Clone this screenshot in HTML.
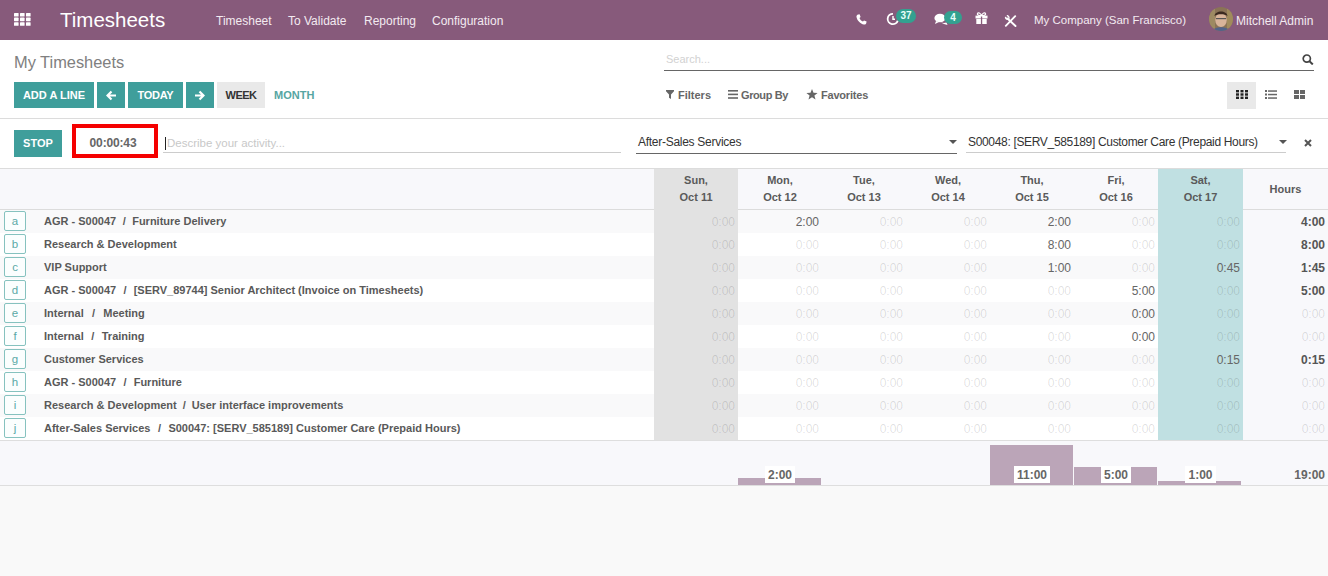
<!DOCTYPE html>
<html><head><meta charset="utf-8">
<style>
*{box-sizing:border-box;margin:0;padding:0}
html,body{width:1328px;height:576px;overflow:hidden;background:#f9f9f9;font-family:"Liberation Sans",sans-serif;color:#4c4c4c;position:relative}
.a{position:absolute;white-space:nowrap}
.nt{color:#f3eaf1;font-size:12px;line-height:14px}
.btn{position:absolute;background:#3f9e9b;color:#fff;font-size:11px;font-weight:bold;text-align:center;line-height:26px;height:26px;top:82px}
.hd{font-size:11px;font-weight:bold;color:#5a5a5a;text-align:center;line-height:16.6px}
.lb{left:4px;width:22px;height:20px;border:1px solid #86c2bf;border-radius:2px;color:#5aa9a6;font-size:11.5px;text-align:center;line-height:19px;background:#fbfefe}
.lt{left:44px;font-size:11px;font-weight:bold;color:#595959;line-height:23px}
.sp{display:inline-block;font-style:normal;width:16px;text-align:center}
.c{font-size:12px;text-align:right;line-height:23px;width:70px}
.z{color:rgba(0,0,0,0.13)}
.v{color:#666}
.tv{color:#555;font-weight:bold}
.fl{text-align:center;font-size:12px;font-weight:bold;color:#666;line-height:17px}
.fl span{background:#fff;padding:1px 3px 0;height:17px;display:inline-block}
</style></head><body>
<!-- navbar -->
<div class="a" style="left:0;top:0;width:1328px;height:40px;background:#875a7b"></div>
<svg class="a" style="left:14px;top:13px" width="17" height="13" viewBox="0 0 17 13">
 <g fill="#fff">
 <rect x="0" y="0" width="4.6" height="3.6" rx="0.6"/><rect x="6" y="0" width="4.6" height="3.6" rx="0.6"/><rect x="12" y="0" width="4.6" height="3.6" rx="0.6"/>
 <rect x="0" y="4.6" width="4.6" height="3.6" rx="0.6"/><rect x="6" y="4.6" width="4.6" height="3.6" rx="0.6"/><rect x="12" y="4.6" width="4.6" height="3.6" rx="0.6"/>
 <rect x="0" y="9.2" width="4.6" height="3.6" rx="0.6"/><rect x="6" y="9.2" width="4.6" height="3.6" rx="0.6"/><rect x="12" y="9.2" width="4.6" height="3.6" rx="0.6"/>
 </g></svg>
<div class="a" style="left:60px;top:8px;font-size:20.5px;line-height:23px;color:#fff">Timesheets</div>
<div class="a nt" style="left:216px;top:14px">Timesheet</div>
<div class="a nt" style="left:288px;top:14px">To Validate</div>
<div class="a nt" style="left:364px;top:14px">Reporting</div>
<div class="a nt" style="left:432px;top:14px">Configuration</div>
<!-- right icons -->
<svg class="a" style="left:856px;top:14px" width="11" height="11" viewBox="0 0 11 11"><path d="M2.2 0.6 L3.6 0.3 L4.6 2.9 L3.5 3.9 C4.1 5.5 5.4 6.9 7 7.6 L8 6.5 L10.6 7.5 L10.3 8.9 C10 10.1 9 10.7 7.9 10.5 C4.3 9.8 1.2 6.7 0.5 3 C0.3 1.9 1 0.9 2.2 0.6Z" fill="#fff"/></svg>
<svg class="a" style="left:886px;top:12px" width="14" height="14" viewBox="0 0 14 14"><path d="M11.8 8.6 A5.2 5.2 0 1 1 7 1.8" stroke="#fff" stroke-width="1.8" fill="none"/><path d="M7 4 V7.2 H9" stroke="#fff" stroke-width="1.4" fill="none"/></svg>
<div class="a" style="left:896px;top:9px;width:20px;height:14px;border-radius:7px;background:#33a190;color:#e8fffb;font-size:10px;font-weight:bold;line-height:14px;text-align:center">37</div>
<svg class="a" style="left:934px;top:13px" width="14" height="13" viewBox="0 0 14 13"><ellipse cx="6" cy="5" rx="5.6" ry="4.3" fill="#fff"/><path d="M2 8 L1 11 L5 9Z" fill="#fff"/><path d="M7 9.5 C9 10 11 10 12.5 9.5 L13.5 12 L10 11 Z" fill="#fff"/></svg>
<div class="a" style="left:944px;top:10.5px;width:18px;height:13px;border-radius:6.5px;background:#33a190;color:#e8fffb;font-size:10px;font-weight:bold;line-height:13px;text-align:center">4</div>
<svg class="a" style="left:975px;top:12px" width="13" height="12" viewBox="0 0 13 12"><path d="M6.5 3.6 C5.5 1 3 0 2.5 1.5 C2 2.8 3.5 3.5 5 3.6Z M6.5 3.6 C7.5 1 10 0 10.5 1.5 C11 2.8 9.5 3.5 8 3.6Z" fill="none" stroke="#fff" stroke-width="1.3"/><rect x="0.5" y="3.6" width="12" height="2.9" fill="#fff"/><rect x="1.3" y="7" width="10.4" height="5" fill="#fff"/><rect x="5.9" y="4.5" width="1.3" height="7.5" fill="#875a7b"/></svg>
<svg class="a" style="left:1004px;top:15px" width="13" height="12" viewBox="0 0 13 12"><path d="M3.5 3.5 L11.5 11" stroke="#fff" stroke-width="1.9" stroke-linecap="round"/><path d="M11.2 1.2 L1.8 10.8" stroke="#fff" stroke-width="1.9" stroke-linecap="round"/><path d="M1 1.6 A2.4 2.4 0 0 0 4.3 4.6 L3.6 3.3 L2.5 2.4Z" fill="#fff"/><path d="M2.8 0.5 A2.4 2.4 0 0 1 4.8 3.8" stroke="#fff" stroke-width="1.3" fill="none"/></svg>
<div class="a nt" style="left:1034px;top:13px;font-size:11.5px">My Company (San Francisco)</div>
<div class="a" style="left:1209px;top:7px;width:24px;height:24px;border-radius:12px;overflow:hidden;background:#8a7356"><svg width="24" height="24" viewBox="0 0 24 24"><rect x="0" y="0" width="6" height="24" fill="#9d8a62"/><rect x="18" y="0" width="6" height="24" fill="#a08b5c"/><ellipse cx="12" cy="13" rx="5.8" ry="7" fill="#d8b49a"/><path d="M5.5 9 C6 3 18 3 18.5 9 C16 6.5 8 6.5 5.5 9Z" fill="#3b2a20"/><rect x="7" y="11" width="10" height="1.2" fill="#555"/><path d="M3 24 C5 19 19 19 21 24Z" fill="#52638a"/></svg></div>
<div class="a nt" style="left:1236px;top:14px">Mitchell Admin</div>

<!-- control panel -->
<div class="a" style="left:0;top:40px;width:1328px;height:79px;background:#fff;border-bottom:1px solid #dcdcdc"></div>
<div class="a" style="left:14px;top:53px;font-size:16.4px;line-height:18px;color:#808080">My Timesheets</div>
<div class="a" style="left:664px;top:70px;width:650px;height:1px;background:#666"></div>
<div class="a" style="left:666px;top:53px;font-size:11px;line-height:12px;color:#d2d2d2">Search...</div>
<svg class="a" style="left:1302px;top:54px" width="12" height="11" viewBox="0 0 12 11"><circle cx="4.8" cy="4.6" r="3.6" stroke="#444" stroke-width="1.7" fill="none"/><path d="M7.5 7.3 L10.8 10.4" stroke="#444" stroke-width="2"/></svg>

<div class="btn" style="left:14px;width:80px">ADD A LINE</div>
<div class="btn" style="left:97px;width:28px"><svg style="position:absolute;left:9px;top:8px" width="11" height="11" viewBox="0 0 11 11"><path d="M10 5.5 H2 M5.5 1.5 L1.5 5.5 L5.5 9.5" stroke="#fff" stroke-width="2.2" fill="none"/></svg></div>
<div class="btn" style="left:128px;width:55px;letter-spacing:-0.3px">TODAY</div>
<div class="btn" style="left:186px;width:28px"><svg style="position:absolute;left:8px;top:8px" width="11" height="11" viewBox="0 0 11 11"><path d="M1 5.5 H9 M5.5 1.5 L9.5 5.5 L5.5 9.5" stroke="#fff" stroke-width="2.2" fill="none"/></svg></div>
<div class="btn" style="left:217px;width:48px;background:#e9e9e9;color:#333;letter-spacing:-0.5px">WEEK</div>
<div class="a" style="left:274px;top:82px;font-size:11px;font-weight:bold;line-height:26px;color:#56a5a2">MONTH</div>

<svg class="a" style="left:666px;top:90px" width="8" height="9" viewBox="0 0 8 9"><path d="M0 0 H8 V1.2 L5 4.5 V9 L3 7.8 V4.5 L0 1.2Z" fill="#666"/></svg>
<div class="a" style="left:678px;top:89px;font-size:11px;line-height:12px;color:#666;font-weight:bold">Filters</div>
<svg class="a" style="left:728px;top:90px" width="10" height="9" viewBox="0 0 10 9"><rect y="0" width="10" height="1.6" fill="#666"/><rect y="3.6" width="10" height="1.6" fill="#666"/><rect y="7.2" width="10" height="1.6" fill="#666"/></svg>
<div class="a" style="left:741px;top:89px;font-size:11px;line-height:12px;color:#666;font-weight:bold;letter-spacing:-0.4px">Group By</div>
<svg class="a" style="left:806px;top:89px" width="12" height="11" viewBox="0 0 12 11"><path d="M6 0 L7.5 3.8 L11.6 4 L8.4 6.5 L9.5 10.5 L6 8.2 L2.5 10.5 L3.6 6.5 L0.4 4 L4.5 3.8Z" fill="#666"/></svg>
<div class="a" style="left:821px;top:89px;font-size:11px;line-height:12px;color:#666;font-weight:bold;letter-spacing:-0.2px">Favorites</div>

<div class="a" style="left:1227px;top:82px;width:29px;height:27px;background:#e9e9e9"></div>
<svg class="a" style="left:1236px;top:90px" width="12" height="9" viewBox="0 0 12 9"><g fill="#222"><rect x="0" y="0" width="3" height="2.4"/><rect x="4.5" y="0" width="3" height="2.4"/><rect x="9" y="0" width="3" height="2.4"/><rect x="0" y="3.3" width="3" height="2.4"/><rect x="4.5" y="3.3" width="3" height="2.4"/><rect x="9" y="3.3" width="3" height="2.4"/><rect x="0" y="6.6" width="3" height="2.4"/><rect x="4.5" y="6.6" width="3" height="2.4"/><rect x="9" y="6.6" width="3" height="2.4"/></g></svg>
<svg class="a" style="left:1265px;top:90px" width="12" height="9" viewBox="0 0 12 9"><g fill="#666">
<rect x="0" y="0" width="2" height="2"/><rect x="3" y="0.3" width="9" height="1.5"/>
<rect x="0" y="3.5" width="2" height="2"/><rect x="3" y="3.8" width="9" height="1.5"/>
<rect x="0" y="7" width="2" height="2"/><rect x="3" y="7.3" width="9" height="1.5"/></g></svg>
<svg class="a" style="left:1294px;top:90px" width="11" height="9" viewBox="0 0 11 9"><g fill="#666">
<rect x="0" y="0" width="5" height="4"/><rect x="6" y="0" width="5" height="4"/><rect x="0" y="5" width="5" height="4"/><rect x="6" y="5" width="5" height="4"/></g></svg>

<!-- timer row -->
<div class="a" style="left:0;top:119px;width:1328px;height:50px;background:#fff;border-bottom:1px solid #dcdcdc"></div>
<div class="btn" style="left:14px;top:130px;width:48px;height:27px;line-height:27px">STOP</div>
<div class="a" style="left:72px;top:124px;width:86px;height:34px;border:4px solid #f50000;background:#fff"></div>
<div class="a" style="left:70px;top:125px;width:86px;height:34px;font-size:12px;font-weight:bold;color:#666;text-align:center;line-height:37px;letter-spacing:-0.15px">00:00:43</div>
<div class="a" style="left:163px;top:152px;width:458px;height:1px;background:#ccc"></div>
<div class="a" style="left:165px;top:137px;width:1px;height:13px;background:#222"></div>
<div class="a" style="left:167px;top:137px;font-size:11.5px;line-height:12px;color:#c8c8c8">Describe your activity...</div>
<div class="a" style="left:636px;top:153px;width:321px;height:1px;background:#666"></div>
<div class="a" style="left:638px;top:136px;font-size:12px;line-height:12px;color:#333;letter-spacing:-0.28px">After-Sales Services</div>
<svg class="a" style="left:949px;top:140px" width="8" height="4" viewBox="0 0 8 4"><path d="M0 0 H8 L4 4Z" fill="#555"/></svg>
<div class="a" style="left:966px;top:152px;width:320px;height:1px;background:#ccc"></div>
<div class="a" style="left:968px;top:136px;font-size:12px;line-height:12px;color:#333;letter-spacing:-0.33px">S00048: [SERV_585189] Customer Care (Prepaid Hours)</div>
<svg class="a" style="left:1279px;top:140px" width="8" height="4" viewBox="0 0 8 4"><path d="M0 0 H8 L4 4Z" fill="#555"/></svg>
<svg class="a" style="left:1304px;top:139px" width="8" height="8" viewBox="0 0 8 8"><path d="M1 1 L7 7 M7 1 L1 7" stroke="#555" stroke-width="2"/></svg>

<!-- grid -->
<div class="a" style="left:0;top:169px;width:1328px;height:317px;background:#fff"></div>
<div class="a" style="left:0;top:169px;width:1328px;height:41px;background:#f8f8fb;border-bottom:1px solid #dcdcdc"></div>
<div class="a" style="left:654px;top:169px;width:84px;height:271px;background:#e2e2e2"></div>
<div class="a" style="left:1158px;top:169px;width:85px;height:271px;background:#c0e0e2"></div>
<div class="a" style="left:0;top:210px;width:654px;height:23px;background:#f9f9fa"></div>
<div class="a" style="left:738px;top:210px;width:84px;height:23px;background:#f9f9fa"></div>
<div class="a" style="left:822px;top:210px;width:84px;height:23px;background:#f9f9fa"></div>
<div class="a" style="left:906px;top:210px;width:84px;height:23px;background:#f9f9fa"></div>
<div class="a" style="left:990px;top:210px;width:84px;height:23px;background:#f9f9fa"></div>
<div class="a" style="left:1074px;top:210px;width:84px;height:23px;background:#f9f9fa"></div>
<div class="a" style="left:1243px;top:210px;width:85px;height:23px;background:#f8f8fb"></div>
<div class="a" style="left:0;top:233px;width:654px;height:23px;background:#ffffff"></div>
<div class="a" style="left:738px;top:233px;width:84px;height:23px;background:#ffffff"></div>
<div class="a" style="left:822px;top:233px;width:84px;height:23px;background:#ffffff"></div>
<div class="a" style="left:906px;top:233px;width:84px;height:23px;background:#ffffff"></div>
<div class="a" style="left:990px;top:233px;width:84px;height:23px;background:#ffffff"></div>
<div class="a" style="left:1074px;top:233px;width:84px;height:23px;background:#ffffff"></div>
<div class="a" style="left:1243px;top:233px;width:85px;height:23px;background:#f8f8fb"></div>
<div class="a" style="left:0;top:256px;width:654px;height:23px;background:#f9f9fa"></div>
<div class="a" style="left:738px;top:256px;width:84px;height:23px;background:#f9f9fa"></div>
<div class="a" style="left:822px;top:256px;width:84px;height:23px;background:#f9f9fa"></div>
<div class="a" style="left:906px;top:256px;width:84px;height:23px;background:#f9f9fa"></div>
<div class="a" style="left:990px;top:256px;width:84px;height:23px;background:#f9f9fa"></div>
<div class="a" style="left:1074px;top:256px;width:84px;height:23px;background:#f9f9fa"></div>
<div class="a" style="left:1243px;top:256px;width:85px;height:23px;background:#f8f8fb"></div>
<div class="a" style="left:0;top:279px;width:654px;height:23px;background:#ffffff"></div>
<div class="a" style="left:738px;top:279px;width:84px;height:23px;background:#ffffff"></div>
<div class="a" style="left:822px;top:279px;width:84px;height:23px;background:#ffffff"></div>
<div class="a" style="left:906px;top:279px;width:84px;height:23px;background:#ffffff"></div>
<div class="a" style="left:990px;top:279px;width:84px;height:23px;background:#ffffff"></div>
<div class="a" style="left:1074px;top:279px;width:84px;height:23px;background:#ffffff"></div>
<div class="a" style="left:1243px;top:279px;width:85px;height:23px;background:#f8f8fb"></div>
<div class="a" style="left:0;top:302px;width:654px;height:23px;background:#f9f9fa"></div>
<div class="a" style="left:738px;top:302px;width:84px;height:23px;background:#f9f9fa"></div>
<div class="a" style="left:822px;top:302px;width:84px;height:23px;background:#f9f9fa"></div>
<div class="a" style="left:906px;top:302px;width:84px;height:23px;background:#f9f9fa"></div>
<div class="a" style="left:990px;top:302px;width:84px;height:23px;background:#f9f9fa"></div>
<div class="a" style="left:1074px;top:302px;width:84px;height:23px;background:#f9f9fa"></div>
<div class="a" style="left:1243px;top:302px;width:85px;height:23px;background:#f8f8fb"></div>
<div class="a" style="left:0;top:325px;width:654px;height:23px;background:#ffffff"></div>
<div class="a" style="left:738px;top:325px;width:84px;height:23px;background:#ffffff"></div>
<div class="a" style="left:822px;top:325px;width:84px;height:23px;background:#ffffff"></div>
<div class="a" style="left:906px;top:325px;width:84px;height:23px;background:#ffffff"></div>
<div class="a" style="left:990px;top:325px;width:84px;height:23px;background:#ffffff"></div>
<div class="a" style="left:1074px;top:325px;width:84px;height:23px;background:#ffffff"></div>
<div class="a" style="left:1243px;top:325px;width:85px;height:23px;background:#f8f8fb"></div>
<div class="a" style="left:0;top:348px;width:654px;height:23px;background:#f9f9fa"></div>
<div class="a" style="left:738px;top:348px;width:84px;height:23px;background:#f9f9fa"></div>
<div class="a" style="left:822px;top:348px;width:84px;height:23px;background:#f9f9fa"></div>
<div class="a" style="left:906px;top:348px;width:84px;height:23px;background:#f9f9fa"></div>
<div class="a" style="left:990px;top:348px;width:84px;height:23px;background:#f9f9fa"></div>
<div class="a" style="left:1074px;top:348px;width:84px;height:23px;background:#f9f9fa"></div>
<div class="a" style="left:1243px;top:348px;width:85px;height:23px;background:#f8f8fb"></div>
<div class="a" style="left:0;top:371px;width:654px;height:23px;background:#ffffff"></div>
<div class="a" style="left:738px;top:371px;width:84px;height:23px;background:#ffffff"></div>
<div class="a" style="left:822px;top:371px;width:84px;height:23px;background:#ffffff"></div>
<div class="a" style="left:906px;top:371px;width:84px;height:23px;background:#ffffff"></div>
<div class="a" style="left:990px;top:371px;width:84px;height:23px;background:#ffffff"></div>
<div class="a" style="left:1074px;top:371px;width:84px;height:23px;background:#ffffff"></div>
<div class="a" style="left:1243px;top:371px;width:85px;height:23px;background:#f8f8fb"></div>
<div class="a" style="left:0;top:394px;width:654px;height:23px;background:#f9f9fa"></div>
<div class="a" style="left:738px;top:394px;width:84px;height:23px;background:#f9f9fa"></div>
<div class="a" style="left:822px;top:394px;width:84px;height:23px;background:#f9f9fa"></div>
<div class="a" style="left:906px;top:394px;width:84px;height:23px;background:#f9f9fa"></div>
<div class="a" style="left:990px;top:394px;width:84px;height:23px;background:#f9f9fa"></div>
<div class="a" style="left:1074px;top:394px;width:84px;height:23px;background:#f9f9fa"></div>
<div class="a" style="left:1243px;top:394px;width:85px;height:23px;background:#f8f8fb"></div>
<div class="a" style="left:0;top:417px;width:654px;height:23px;background:#ffffff"></div>
<div class="a" style="left:738px;top:417px;width:84px;height:23px;background:#ffffff"></div>
<div class="a" style="left:822px;top:417px;width:84px;height:23px;background:#ffffff"></div>
<div class="a" style="left:906px;top:417px;width:84px;height:23px;background:#ffffff"></div>
<div class="a" style="left:990px;top:417px;width:84px;height:23px;background:#ffffff"></div>
<div class="a" style="left:1074px;top:417px;width:84px;height:23px;background:#ffffff"></div>
<div class="a" style="left:1243px;top:417px;width:85px;height:23px;background:#f8f8fb"></div>
<div class="a hd" style="left:654px;top:172px;width:84px">Sun,<br>Oct 11</div>
<div class="a hd" style="left:738px;top:172px;width:84px">Mon,<br>Oct 12</div>
<div class="a hd" style="left:822px;top:172px;width:84px">Tue,<br>Oct 13</div>
<div class="a hd" style="left:906px;top:172px;width:84px">Wed,<br>Oct 14</div>
<div class="a hd" style="left:990px;top:172px;width:84px">Thu,<br>Oct 15</div>
<div class="a hd" style="left:1074px;top:172px;width:84px">Fri,<br>Oct 16</div>
<div class="a hd" style="left:1158px;top:172px;width:85px">Sat,<br>Oct 17</div>
<div class="a hd" style="left:1243px;top:181px;width:85px">Hours</div>
<div class="a lb" style="top:211px">a</div>
<div class="a lt" style="top:210px">AGR - S00047<i class=sp style='width:16px'>/</i>Furniture Delivery</div>
<div class="a c z" style="left:665px;top:211px">0:00</div>
<div class="a c v" style="left:749px;top:211px">2:00</div>
<div class="a c z" style="left:833px;top:211px">0:00</div>
<div class="a c z" style="left:917px;top:211px">0:00</div>
<div class="a c v" style="left:1001px;top:211px">2:00</div>
<div class="a c z" style="left:1085px;top:211px">0:00</div>
<div class="a c z" style="left:1170px;top:211px">0:00</div>
<div class="a c tv" style="left:1255px;top:211px">4:00</div>
<div class="a lb" style="top:234px">b</div>
<div class="a lt" style="top:233px">Research &amp; Development</div>
<div class="a c z" style="left:665px;top:234px">0:00</div>
<div class="a c z" style="left:749px;top:234px">0:00</div>
<div class="a c z" style="left:833px;top:234px">0:00</div>
<div class="a c z" style="left:917px;top:234px">0:00</div>
<div class="a c v" style="left:1001px;top:234px">8:00</div>
<div class="a c z" style="left:1085px;top:234px">0:00</div>
<div class="a c z" style="left:1170px;top:234px">0:00</div>
<div class="a c tv" style="left:1255px;top:234px">8:00</div>
<div class="a lb" style="top:257px">c</div>
<div class="a lt" style="top:256px">VIP Support</div>
<div class="a c z" style="left:665px;top:257px">0:00</div>
<div class="a c z" style="left:749px;top:257px">0:00</div>
<div class="a c z" style="left:833px;top:257px">0:00</div>
<div class="a c z" style="left:917px;top:257px">0:00</div>
<div class="a c v" style="left:1001px;top:257px">1:00</div>
<div class="a c z" style="left:1085px;top:257px">0:00</div>
<div class="a c v" style="left:1170px;top:257px">0:45</div>
<div class="a c tv" style="left:1255px;top:257px">1:45</div>
<div class="a lb" style="top:280px">d</div>
<div class="a lt" style="top:279px">AGR - S00047<i class=sp style='width:17.5px'>/</i>[SERV_89744] Senior Architect (Invoice on Timesheets)</div>
<div class="a c z" style="left:665px;top:280px">0:00</div>
<div class="a c z" style="left:749px;top:280px">0:00</div>
<div class="a c z" style="left:833px;top:280px">0:00</div>
<div class="a c z" style="left:917px;top:280px">0:00</div>
<div class="a c z" style="left:1001px;top:280px">0:00</div>
<div class="a c v" style="left:1085px;top:280px">5:00</div>
<div class="a c z" style="left:1170px;top:280px">0:00</div>
<div class="a c tv" style="left:1255px;top:280px">5:00</div>
<div class="a lb" style="top:303px">e</div>
<div class="a lt" style="top:302px">Internal<i class=sp style='width:19.5px'>/</i>Meeting</div>
<div class="a c z" style="left:665px;top:303px">0:00</div>
<div class="a c z" style="left:749px;top:303px">0:00</div>
<div class="a c z" style="left:833px;top:303px">0:00</div>
<div class="a c z" style="left:917px;top:303px">0:00</div>
<div class="a c z" style="left:1001px;top:303px">0:00</div>
<div class="a c v" style="left:1085px;top:303px">0:00</div>
<div class="a c z" style="left:1170px;top:303px">0:00</div>
<div class="a c z" style="left:1255px;top:303px">0:00</div>
<div class="a lb" style="top:326px">f</div>
<div class="a lt" style="top:325px">Internal<i class=sp style='width:18px'>/</i>Training</div>
<div class="a c z" style="left:665px;top:326px">0:00</div>
<div class="a c z" style="left:749px;top:326px">0:00</div>
<div class="a c z" style="left:833px;top:326px">0:00</div>
<div class="a c z" style="left:917px;top:326px">0:00</div>
<div class="a c z" style="left:1001px;top:326px">0:00</div>
<div class="a c v" style="left:1085px;top:326px">0:00</div>
<div class="a c z" style="left:1170px;top:326px">0:00</div>
<div class="a c z" style="left:1255px;top:326px">0:00</div>
<div class="a lb" style="top:349px">g</div>
<div class="a lt" style="top:348px">Customer Services</div>
<div class="a c z" style="left:665px;top:349px">0:00</div>
<div class="a c z" style="left:749px;top:349px">0:00</div>
<div class="a c z" style="left:833px;top:349px">0:00</div>
<div class="a c z" style="left:917px;top:349px">0:00</div>
<div class="a c z" style="left:1001px;top:349px">0:00</div>
<div class="a c z" style="left:1085px;top:349px">0:00</div>
<div class="a c v" style="left:1170px;top:349px">0:15</div>
<div class="a c tv" style="left:1255px;top:349px">0:15</div>
<div class="a lb" style="top:372px">h</div>
<div class="a lt" style="top:371px">AGR - S00047<i class=sp style='width:17.5px'>/</i>Furniture</div>
<div class="a c z" style="left:665px;top:372px">0:00</div>
<div class="a c z" style="left:749px;top:372px">0:00</div>
<div class="a c z" style="left:833px;top:372px">0:00</div>
<div class="a c z" style="left:917px;top:372px">0:00</div>
<div class="a c z" style="left:1001px;top:372px">0:00</div>
<div class="a c z" style="left:1085px;top:372px">0:00</div>
<div class="a c z" style="left:1170px;top:372px">0:00</div>
<div class="a c z" style="left:1255px;top:372px">0:00</div>
<div class="a lb" style="top:395px">i</div>
<div class="a lt" style="top:394px">Research &amp; Development<i class=sp style='width:15px'>/</i>User interface improvements</div>
<div class="a c z" style="left:665px;top:395px">0:00</div>
<div class="a c z" style="left:749px;top:395px">0:00</div>
<div class="a c z" style="left:833px;top:395px">0:00</div>
<div class="a c z" style="left:917px;top:395px">0:00</div>
<div class="a c z" style="left:1001px;top:395px">0:00</div>
<div class="a c z" style="left:1085px;top:395px">0:00</div>
<div class="a c z" style="left:1170px;top:395px">0:00</div>
<div class="a c z" style="left:1255px;top:395px">0:00</div>
<div class="a lb" style="top:418px">j</div>
<div class="a lt" style="top:417px">After-Sales Services<i class=sp style='width:18px'>/</i>S00047: [SERV_585189] Customer Care (Prepaid Hours)</div>
<div class="a c z" style="left:665px;top:418px">0:00</div>
<div class="a c z" style="left:749px;top:418px">0:00</div>
<div class="a c z" style="left:833px;top:418px">0:00</div>
<div class="a c z" style="left:917px;top:418px">0:00</div>
<div class="a c z" style="left:1001px;top:418px">0:00</div>
<div class="a c z" style="left:1085px;top:418px">0:00</div>
<div class="a c z" style="left:1170px;top:418px">0:00</div>
<div class="a c z" style="left:1255px;top:418px">0:00</div>
<div class="a" style="left:0;top:440px;width:1328px;height:46px;background:#f8f8fb;border-top:1px solid #dedede;border-bottom:1px solid #dedede"></div>
<div class="a" style="left:738px;top:478px;width:83px;height:7px;background:#bba5b8"></div>
<div class="a fl" style="left:738px;top:466px;width:84px"><span>2:00</span></div>
<div class="a" style="left:990px;top:445px;width:83px;height:40px;background:#bba5b8"></div>
<div class="a fl" style="left:990px;top:466px;width:84px"><span>11:00</span></div>
<div class="a" style="left:1074px;top:467px;width:83px;height:18px;background:#bba5b8"></div>
<div class="a fl" style="left:1074px;top:466px;width:84px"><span>5:00</span></div>
<div class="a" style="left:1158px;top:481px;width:83px;height:4px;background:#bba5b8"></div>
<div class="a fl" style="left:1158px;top:466px;width:85px"><span>1:00</span></div>
<div class="a fl" style="left:1243px;top:466px;width:85px;text-align:right"><span style="background:none">19:00</span></div>
</body></html>
